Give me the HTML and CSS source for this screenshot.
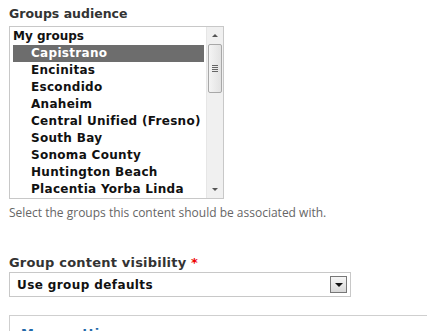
FILE: index.html
```html
<!DOCTYPE html>
<html>
<head>
<meta charset="utf-8">
<link rel="stylesheet" href="styles.css">
</head>
<body>
<div class="page">
  <div class="field">
    <div class="label">Groups audience</div>
    <div class="listbox">
      <div class="options">
        <div class="optgroup">My groups</div>
        <div class="opt selected">Capistrano</div>
        <div class="opt">Encinitas</div>
        <div class="opt">Escondido</div>
        <div class="opt">Anaheim</div>
        <div class="opt">Central Unified (Fresno)</div>
        <div class="opt">South Bay</div>
        <div class="opt">Sonoma County</div>
        <div class="opt">Huntington Beach</div>
        <div class="opt">Placentia Yorba Linda</div>
      </div>
      <div class="scrollbar">
        <div class="arrow up"></div>
        <div class="track">
          <div class="thumb"><span class="grip"></span></div>
        </div>
        <div class="arrow down"></div>
      </div>
    </div>
    <div class="desc">Select the groups this content should be associated with.</div>
  </div>
  <div class="field second">
    <div class="label">Group content visibility <span class="req">*</span></div>
    <div class="select">
      <span class="value">Use group defaults</span>
      <span class="btn"><span class="tri"></span></span>
    </div>
  </div>
  <div class="fieldset">
    <div class="legend">Menu settings</div>
  </div>
</div>
</body>
</html>
```

FILE: styles.css
```css
html, body { margin: 0; padding: 0; background: #fff; }
body { font-family: "DejaVu Sans", Verdana, sans-serif; overflow: hidden; }
.page { padding: 6px 0 0 9px; }
.label { font-size: 12.5px; font-weight: bold; color: #333; line-height: 16px; height: 20px; }
.req { color: #e00; }
.listbox {
  width: 213px; height: 171px;
  border: 1px solid #c8c8c8;
  display: flex;
}
.options { flex: 1; padding: 1px 0 0 3px; min-width: 0; }
.optgroup, .opt { height: 17px; line-height: 17px; font-size: 12px; font-weight: bold; color: #111; white-space: nowrap; }
.opt { padding-left: 18px; margin-right: 2px; letter-spacing: 0.3px; }
.opt.selected { background: #6d6d6d; color: #fff; }
.scrollbar {
  width: 16px; flex: none; background: #f0f0f0;
  border-left: 1px solid #e6e6e6;
  display: flex; flex-direction: column;
}
.arrow { height: 17px; display: flex; align-items: center; justify-content: center; }
.arrow.up::after { content: ""; border: 3px solid transparent; border-bottom: 3px solid #555; border-top: 0; }
.arrow.down::after { content: ""; border: 3px solid transparent; border-top: 3px solid #555; border-bottom: 0; }
.track { flex: 1; padding: 0 1px; }
.thumb {
  height: 47px; border: 1px solid #a8a8a8; border-radius: 2px;
  background: linear-gradient(to right, #f4f4f4, #e2e2e2);
  display: flex; align-items: center; justify-content: center;
}
.grip { width: 6px; height: 7px; background: repeating-linear-gradient(#666 0 1px, transparent 1px 2px); }
.desc { font-family: "Open Sans", sans-serif; font-size: 12px; color: #666; margin-top: 6px; line-height: 16px; }
.second { margin-top: 36px; }
.second .label { font-size: 13px; letter-spacing: 0.2px; height: 15px; line-height: 12px; }
.select {
  width: 340px; height: 23px; border: 1px solid #c8c8c8;
  display: flex; align-items: center; justify-content: space-between;
}
.value { font-size: 12px; font-weight: bold; color: #111; padding-left: 7px; letter-spacing: 0.4px; }
.btn {
  width: 15px; height: 15px; border: 1px solid #777; margin-right: 3px;
  background: linear-gradient(#f6f6f6, #d8d8d8);
  display: flex; align-items: center; justify-content: center;
}
.tri { border: 4px solid transparent; border-top: 4px solid #111; border-bottom: 0; }
.fieldset { margin-top: 18px; border-top: 1px solid #cfcfcf; border-left: 1px solid #cfcfcf; height: 40px; padding: 10px 0 0 11px; }
.legend { font-size: 13px; font-weight: bold; color: #2369a8; line-height: 16px; }
```
